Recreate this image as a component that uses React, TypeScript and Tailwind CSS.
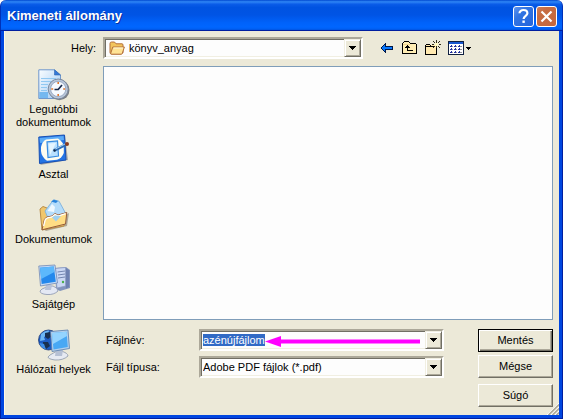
import { useEffect, useRef, type ReactNode } from "react";

const PLACES = [
  { label: "Legutóbbi dokumentumok", icon: <RecentIcon /> },
  { label: "Asztal", icon: <DesktopIcon /> },
  { label: "Dokumentumok", icon: <DocumentsIcon /> },
  { label: "Sajátgép", icon: <ComputerIcon /> },
  { label: "Hálózati helyek", icon: <NetworkIcon /> },
];

export default function App() {
  const nameRef = useRef<HTMLInputElement>(null);

  useEffect(() => {
    nameRef.current?.focus();
    nameRef.current?.select();
  }, []);

  return (
    <div className="min-h-screen bg-white flex flex-col font-['Liberation_Sans',Arial,sans-serif] text-[11px] leading-[13px] text-black">
      <TitleBar />

      <main className="relative flex-1 flex flex-col bg-[#ece9d8] border-4 border-t-0 border-[#0046e0] shadow-[inset_1px_0_0_#fff8e8] outline outline-1 -outline-offset-1 outline-[#001ea0] pt-[7px] pr-[6px] pb-2">
        {/* Folder row */}
        <div className="flex items-center h-[22px] mb-[7px]">
          <label htmlFor="folder" className="w-[99px] pr-[7px] text-right">
            Hely:
          </label>
          <Field>
            <FolderIcon />
            <select
              id="folder"
              className="flex-1 min-w-0 h-full appearance-none bg-transparent pl-1 outline-none"
            >
              <option>könyv_anyag</option>
            </select>
            <DropArrow />
          </Field>
          <div className="flex gap-[7px] ml-4 pr-[81px]">
            <ToolButton label="Vissza">
              <BackIcon />
            </ToolButton>
            <ToolButton label="Egy szinttel feljebb">
              <UpIcon />
            </ToolButton>
            <ToolButton label="Új mappa">
              <NewFolderIcon />
            </ToolButton>
            <ToolButton label="Nézetek">
              <ViewsIcon />
            </ToolButton>
          </div>
        </div>

        <div className="flex-1 flex">
          {/* Places bar */}
          <nav className="w-[99px] shrink-0 pt-[3px]">
            {PLACES.map((place) => (
              <a
                key={place.label}
                href="#"
                className="flex flex-col items-center gap-[2px] h-[65px] px-2 text-center"
              >
                {place.icon}
                <span>{place.label}</span>
              </a>
            ))}
          </nav>

          <div className="flex-1 min-w-0 flex flex-col gap-[9px]">
            <div className="flex-1 bg-[#fdfdfd] border border-[#7f9db9]" />

            <form
              className="flex gap-[34px] pl-[3px]"
              onSubmit={(e) => e.preventDefault()}
            >
              <div className="flex-1 min-w-0 grid grid-cols-[93px_1fr] auto-rows-[22px] content-start items-center gap-y-[5px]">
                <label htmlFor="filename">Fájlnév:</label>
                <Field>
                  <input
                    id="filename"
                    ref={nameRef}
                    defaultValue="azénújfájlom"
                    className="flex-1 min-w-0 h-full bg-transparent outline-none selection:bg-[#316ac5] selection:text-white"
                  />
                  <PointerArrow />
                  <DropArrow />
                </Field>
                <label htmlFor="filetype">Fájl típusa:</label>
                <Field>
                  <select
                    id="filetype"
                    className="flex-1 min-w-0 h-full appearance-none bg-transparent outline-none"
                  >
                    <option>Adobe PDF fájlok (*.pdf)</option>
                  </select>
                  <DropArrow />
                </Field>
              </div>

              <div className="w-[75px] flex flex-col">
                <button
                  type="submit"
                  className="h-[23px] border border-black bg-[#ece9d8] shadow-[inset_1px_1px_0_#fff,inset_-1px_-1px_0_#716f64,inset_-2px_-2px_0_#aca899]"
                >
                  Mentés
                </button>
                <DialogButton className="mt-[3px]">Mégse</DialogButton>
                <DialogButton className="mt-[6px]">Súgó</DialogButton>
              </div>
            </form>
          </div>
        </div>

        <SizeGrip />
      </main>
    </div>
  );
}

function TitleBar() {
  return (
    <header className="h-[30px] flex items-center justify-between pl-[6px] pr-[5px] rounded-t-[6px] border-x border-[#0031b8] bg-[linear-gradient(#0048d0_0%,#2f86f5_6%,#0a5ce8_14%,#0053e1_25%,#0054e5_50%,#0062fa_75%,#0066ff_90%,#0060f4_96%,#0052e0_100%)]">
      <h1 className="pt-[2px] text-[13px] leading-4 font-bold text-white [text-shadow:1px_1px_0_#0a2f9c]">
        Kimeneti állomány
      </h1>
      <div className="flex gap-[2px] pt-[3px]">
        <button
          type="button"
          aria-label="Súgó"
          className="size-[21px] flex items-center justify-center rounded-[3px] border border-white bg-[linear-gradient(135deg,#5f94ee,#3274e2_35%,#2464dc)]"
        >
          <svg width="19" height="19" viewBox="0 0 19 19" fill="none">
            <path
              d="M5.5 6.2C5.5 1.9 13.4 2 13.4 6.2C13.4 8.9 9.6 8.7 9.6 12"
              stroke="#fff"
              strokeWidth="2.2"
            />
            <path d="M8.4 13.5h2.4v2.4h-2.4z" fill="#fff" />
          </svg>
        </button>
        <button
          type="button"
          aria-label="Bezárás"
          className="size-[21px] flex items-center justify-center rounded-[3px] border border-white bg-[linear-gradient(135deg,#cc7c58,#c66c42_30%,#c4683e)]"
        >
          <svg width="19" height="19" viewBox="0 0 19 19" fill="none">
            <path d="M4.5 4.5L14.5 14.5M14.5 4.5L4.5 14.5" stroke="#fff" strokeWidth="2.2" />
          </svg>
        </button>
      </div>
    </header>
  );
}

function Field({ children }: { children: ReactNode }) {
  return (
    <div className="relative flex-1 min-w-0 h-[22px] flex items-center bg-[#fdfdfd] border-2 border-t-[#aca899] border-l-[#aca899] border-r-white border-b-white shadow-[inset_1px_1px_0_#716f64,inset_-1px_-1px_0_#f1efe2] pl-[2px]">
      {children}
    </div>
  );
}

function DropArrow() {
  return (
    <span className="pointer-events-none w-[17px] h-[18px] shrink-0 flex items-center justify-center bg-[#ece9d8] border border-t-[#f1efe2] border-l-[#f1efe2] border-r-[#716f64] border-b-[#716f64] shadow-[inset_1px_1px_0_#fff,inset_-1px_-1px_0_#aca899]">
      <svg width="7" height="4" viewBox="0 0 7 4" shapeRendering="crispEdges">
        <path d="M0 0h7v1H0zM1 1h5v1H1zM2 2h3v1H2zM3 3h1v1H3z" />
      </svg>
    </span>
  );
}

function DialogButton({ className, children }: { className: string; children: ReactNode }) {
  return (
    <button
      type="button"
      className={`h-[23px] bg-[#ece9d8] border border-t-white border-l-white border-r-[#716f64] border-b-[#716f64] shadow-[inset_-1px_-1px_0_#aca899] ${className}`}
    >
      {children}
    </button>
  );
}

function ToolButton({ label, children }: { label: string; children: ReactNode }) {
  return (
    <button type="button" aria-label={label} className="h-4 flex items-center">
      {children}
    </button>
  );
}

function PointerArrow() {
  return (
    <svg
      className="pointer-events-none absolute right-[22px] top-[5px]"
      width="155"
      height="11"
      viewBox="0 0 155 11"
      fill="#ff00ff"
    >
      <path d="M0 5.5L16 0V11zM15 3.5h140v4H15z" />
    </svg>
  );
}

function SizeGrip() {
  return (
    <svg
      className="absolute right-0 bottom-0"
      width="12"
      height="12"
      viewBox="0 0 12 12"
      fill="none"
    >
      <path d="M0 12L12 0M4 12L12 4M8 12L12 8" stroke="#fff" />
      <path d="M1.5 12L12 1.5M5.5 12L12 5.5M9.5 12L12 9.5" stroke="#aca899" strokeWidth="1.6" />
    </svg>
  );
}

function FolderIcon() {
  return (
    <svg className="ml-[2px] shrink-0" width="16" height="16" viewBox="0 0 16 16">
      <path
        d="M1 3.5Q1 2 2.5 2H5.5L7 3.8H13Q14 3.8 14 5V12.5L12.5 14H2.5Q1 14 1 12.5Z"
        fill="#f2c45c"
        stroke="#b4703c"
      />
      <path
        d="M3.8 7H15.4L13.2 13.6Q13 14.2 12 14.2H2.4Q1.4 14.2 1.8 13Z"
        fill="#ffe394"
        stroke="#b4703c"
      />
      <path d="M4.6 8H14" stroke="#fff8d8" />
    </svg>
  );
}

function BackIcon() {
  return (
    <svg width="16" height="16" viewBox="0 0 16 16" shapeRendering="crispEdges">
      <path
        d="M6 3h1v3h7v4H7v3H6v-1H5v-1H4v-1H3V9H2V7h1V6h1V5h1V4h1z"
        fill="#001848"
      />
      <path d="M6 5v2h7v2H6v2H5v-1H4V9H3V7h1V6h1V5z" fill="#0878ff" />
    </svg>
  );
}

function UpIcon() {
  return (
    <svg width="16" height="16" viewBox="0 0 16 16" shapeRendering="crispEdges">
      <path d="M1 3h1V2h5v1h7v10H1z" fill="#ffedb4" />
      <path d="M2 1h5v1H2zM1 2h1v1H1zM7 2h1v1H7zM0 3h1v10H0zM8 3h6v1H8zM14 4h1v9h-1zM0 13h15v1H0z" />
      <path d="M1 4h7v1H1z" fill="#f0d490" />
      <path d="M5 5h1v1H5zM4 6h3v1H4zM3 7h5v1H3zM5 8h1v2H5zM5 10h6v1H5z" />
    </svg>
  );
}

function NewFolderIcon() {
  return (
    <svg width="16" height="16" viewBox="0 0 16 16" shapeRendering="crispEdges">
      <path d="M1 5h10v9H1z" fill="#ffe9b0" />
      <path d="M1 4h4v1H1zM0 5h1v9H0zM5 5h1v1H5zM1 6h8v1H1zM11 8h1v6h-1zM0 14h12v1H0z" />
      <path
        d="M11 0h1v3h-1zM11 6h1v2h-1zM8 1h1v1H8zM9 2h1v1H9zM14 1h1v1h-1zM13 2h1v1h-1zM7 4h2v1H7zM14 4h2v1h-2zM9 6h1v1H9zM8 7h1v1H8zM13 6h1v1h-1zM14 7h1v1h-1z"
        fill="#302c18"
      />
      <path d="M10 3h3v3h-3z" fill="#fff8c0" />
    </svg>
  );
}

function ViewsIcon() {
  return (
    <svg width="24" height="16" viewBox="0 0 24 16" shapeRendering="crispEdges">
      <path d="M0 1h16v14H0z" fill="#102040" />
      <path d="M1 4h14v10H1z" fill="#fff" />
      <path d="M1 2h14v2H1z" fill="#1858d0" />
      <path
        d="M3 5h1v1H3zM2 6h2v1H2zM7 5h1v1H7zM6 6h2v1H6zM11 5h1v1h-1zM10 6h2v1h-2zM3 8h1v1H3zM2 9h2v1H2zM7 8h1v1H7zM6 9h2v1H6zM11 8h1v1h-1zM10 9h2v1h-2zM3 11h1v1H3zM2 12h2v1H2zM7 11h1v1H7zM6 12h2v1H6zM11 11h1v1h-1zM10 12h2v1h-2z"
        fill="#2030a0"
      />
      <path
        d="M4 6h1v1H4zM8 6h1v1H8zM12 6h2v1h-2zM4 9h1v1H4zM8 9h1v1H8zM12 9h2v1h-2zM4 12h1v1H4zM8 12h1v1H8zM12 12h2v1h-2z"
        fill="#909098"
      />
      <path d="M18 7h5v1h-5zM19 8h3v1h-3zM20 9h1v1h-1z" />
    </svg>
  );
}

function RecentIcon() {
  return (
    <svg width="32" height="32" viewBox="0 0 32 32" className="shrink-0">
      <defs>
        <linearGradient id="page" x1="0" y1="0" x2="1" y2="1">
          <stop offset="0" stopColor="#fafdff" />
          <stop offset="1" stopColor="#9cc8f4" />
        </linearGradient>
      </defs>
      <path d="M.8 .8H16.5L22.5 6V29.5H.8Z" fill="url(#page)" stroke="#7098cc" />
      <path d="M16.5 .8V6H22.5Z" fill="#3478d8" stroke="#3064b0" strokeWidth=".6" />
      <path d="M3 9.5H18M3 12.5H13M3 15.5H10M3 18.5H9M3 21.5H9" stroke="#90c8f2" />
      <path d="M1.3 23H10V29H1.3Z" fill="#74b8f0" />
      <circle cx="21.3" cy="21" r="10.2" fill="#7d8086" />
      <circle cx="20.2" cy="20" r="10" fill="#b9c6d8" stroke="#7b899e" />
      <circle cx="20.2" cy="20" r="7.6" fill="#f6faff" stroke="#8498b8" strokeWidth=".7" />
      <path d="M20.2 13v2M20.2 25v2M13.2 20h2M25.2 20h2" stroke="#e07830" strokeWidth="1.6" />
      <path d="M16.5 20.5H20.2L24 16" stroke="#182848" strokeWidth="1.7" fill="none" />
    </svg>
  );
}

function DesktopIcon() {
  return (
    <svg width="32" height="32" viewBox="0 0 32 32" className="shrink-0">
      <path d="M2 4L27 1.5L30 26L2.5 31Z" fill="#68707c" opacity=".5" />
      <path d="M.8 3L26.5 1L28 26L1.5 29.5Z" fill="#2474e4" stroke="#1850b4" />
      <path d="M1.5 4L25.5 2L26 6L2 9Z" fill="#5cacf8" />
      <path
        d="M8 5.5L20 4.5Q25.8 8 25.8 14V19Q24 24 19 25.8L9 26.8Q3.5 23 3 17V13Q4 7.5 8 5.5Z"
        fill="#fffdf0"
      />
      <path d="M9 7.8L19.5 6.8L20.5 22L10 23.5Z" fill="#b8e0ff" stroke="#388ce0" strokeWidth="1.2" />
      <path d="M10.5 9.5L18 9L12 21Z" fill="#e4f5ff" />
      <path d="M16 16.5L28 10.5" stroke="#2c6cb4" strokeWidth="3" />
      <path d="M16.5 15.5L27 10" stroke="#a8d4f8" />
      <circle cx="29" cy="10" r="2" fill="#8a3b20" />
      <circle cx="16.5" cy="16.5" r="1.2" fill="#102848" />
    </svg>
  );
}

function DocumentsIcon() {
  return (
    <svg width="32" height="32" viewBox="0 0 32 32" className="shrink-0">
      <path d="M5 30L8 32L29 27L31 14Z" fill="#706858" opacity=".5" />
      <path d="M2 10L5 7.5L9 9L11 12L27 13L26 27L4 31Z" fill="#f0c66c" stroke="#b88c48" />
      <path d="M7 12L15.5 .8L21 2.2L28 15L19 24L10 19Z" fill="#b4dcfa" stroke="#7ab0dc" strokeWidth=".9" />
      <path d="M13 2.5L16 .8L20 2L18 4Z" fill="#2884dc" />
      <path d="M14 5L17 8L16 13L9.5 12Z" fill="#edf8ff" />
      <path
        d="M6.5 20L9 18L14 17L17 14.5L20 16L28.8 13.5L27.5 25L4 30.8Z"
        fill="#ffdd84"
        stroke="#965c3c"
      />
      <path d="M5.6 27L7.3 20.5L9.5 18.8L14 18L17 15.6L20 17L27.6 14.7" stroke="#fff" strokeWidth="1.3" fill="none" />
      <path d="M14 18.5L17 16.5L23 17L18 22.5Z" fill="#9fd0f0" />
    </svg>
  );
}

function ComputerIcon() {
  return (
    <svg width="32" height="32" viewBox="0 0 32 32" className="shrink-0">
      <path d="M17 4L28 3L32 6V24L22 27L18 25Z" fill="#8294bc" />
      <path d="M17 4.5L27.5 3.5V22L19 24Z" fill="#cbd8f4" stroke="#8a9ac0" strokeWidth=".7" />
      <path d="M19.5 8L27 7M20 11L27 10M20 14L27 13" stroke="#7386b0" />
      <path d="M28 4L31 6.5V23L28 24.5Z" fill="#6c80b0" />
      <circle cx="25" cy="18" r="1.2" fill="#48b048" />
      <path d="M4 25Q9 22 15 22Q20 24 20 27Q16 31 9 30.5Q2 30 2 27Z" fill="#e4e8f4" stroke="#8994ae" strokeWidth=".8" />
      <path d="M8 20L14 21L13 26H7Z" fill="#b8c2d8" />
      <path d="M.8 2L17 1L19.5 19L2.5 22Z" fill="#c5daf6" stroke="#7189b4" strokeWidth=".8" />
      <path d="M2 3.8L15.8 2.6L17.8 17.8L3.7 20Z" fill="#2488ec" />
      <path d="M2 3.8L15.8 2.6L16.4 8L3.2 15Z" fill="#5cb8fc" />
    </svg>
  );
}

function NetworkIcon() {
  return (
    <svg width="32" height="32" viewBox="0 0 32 32" className="shrink-0">
      <circle cx="10.5" cy="11" r="10" fill="#1c5cc4" stroke="#102c68" strokeWidth=".7" />
      <path d="M3 5Q7 1 11 1.5L10 6L6 8L7 11L2 12Z" fill="#6db7f4" />
      <path d="M7 4L12 3L14 7L10 10L7 8ZM5 13L10 13L12 17L8 20L5 17Z" fill="#183050" />
      <path d="M1.5 14Q3 19 8 20.5L6 15Z" fill="#3d8ee8" />
      <path d="M12 26Q17 22 23 22Q30 24 30 27Q25 31.5 17 31Q10 30 10 28Z" fill="#e6eaf2" stroke="#8995a8" strokeWidth=".8" />
      <path d="M18 20L25 21L24 27H17Z" fill="#b5c0d4" />
      <path d="M12.5 2.5L30 1L31.5 19.5L14 22.5Z" fill="#b4d0ec" stroke="#587cac" strokeWidth=".8" />
      <path d="M14 4L28.5 2.8L29.8 18L15.5 20.5Z" fill="#48a8f4" />
      <path d="M14 4L28.5 2.8L29 7L15 15Z" fill="#94d4ff" />
    </svg>
  );
}
